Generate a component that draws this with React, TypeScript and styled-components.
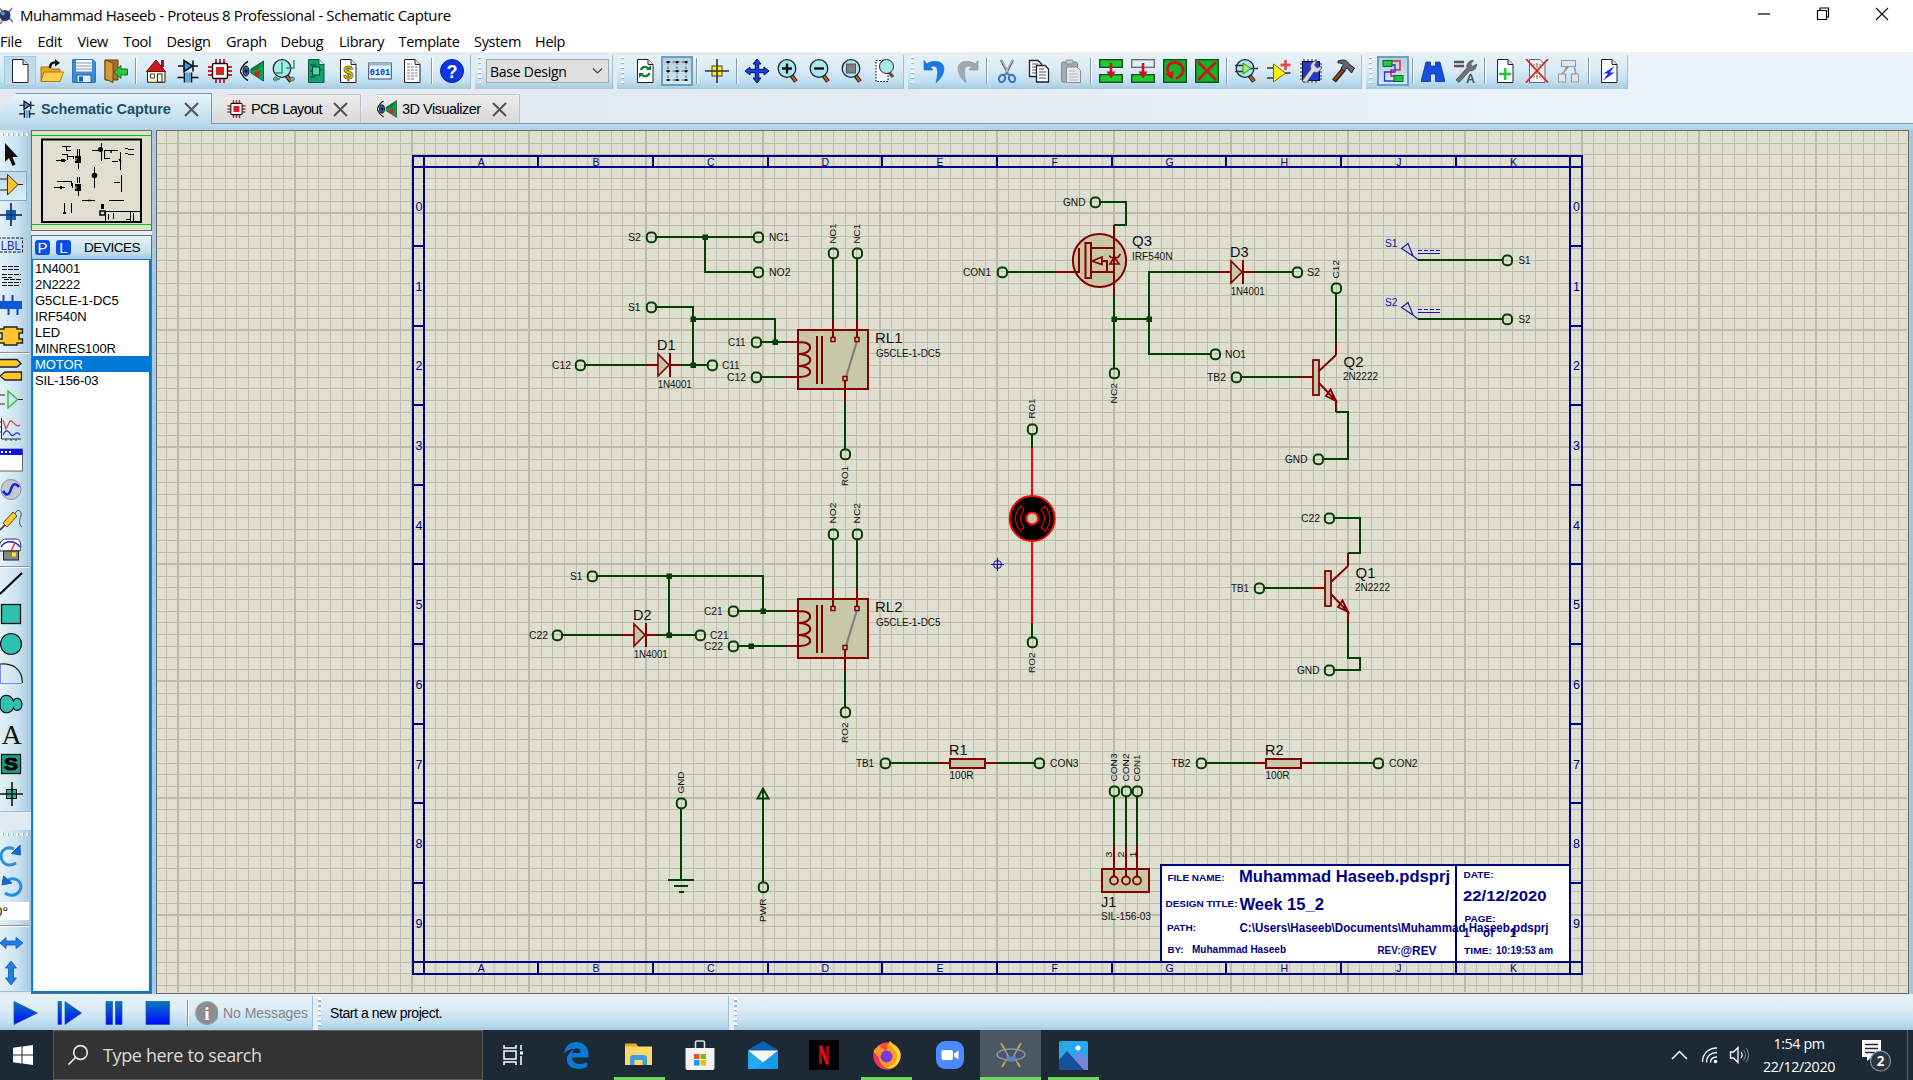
import React from 'react';
import styled, { createGlobalStyle } from 'styled-components';

const GlobalStyle = createGlobalStyle`
  * { box-sizing: border-box; }
  body { margin: 0; overflow: hidden; background: #e3eaf1; }
`;

const uiFont = '"Open Sans", "Noto Sans", sans-serif';
const arial = '"Liberation Sans", Arial, sans-serif';
const barFill = 'linear-gradient(180deg, #e4f2f8 0%, #dcebf5 40%, #bfe0f2 78%, #a9c9dd 100%)';

const Window = styled.div`
  width: 1913px; height: 1080px; display: flex; flex-direction: column;
  overflow: hidden; font-family: ${arial}; color: #000;
  background: linear-gradient(90deg, #e2e9f0, #e4ebf2 50%, #eaf2fa 80%);
`;

/* ---------- title and menu ---------- */
const TitleBar = styled.header`
  height: 30px; background: #fff; display: flex; align-items: center;
  font: 15px/30px ${uiFont}; white-space: nowrap; padding-bottom: 1px;
`;
const TitleText = styled.span`margin-left: 4px; letter-spacing: -0.41px; flex: 1;`;
const WinControls = styled.div`display: flex; width: 179px; padding-bottom: 1px;`;
const WinButton = styled.div`width: 59px; display: flex; justify-content: center;`;
const MenuBar = styled.nav`
  height: 22px; background: #fff; display: flex; font: 14.5px/23px ${uiFont};
  letter-spacing: -0.3px; white-space: nowrap;
`;
const MenuItem = styled.span<{ $w: number }>`width: ${p => p.$w}px; flex: none;`;

/* ---------- toolbars ---------- */
const Toolbars = styled.div`height: 37px; padding-top: 2px; display: flex; border-top: 1px solid #f0f0f0;`;
const Bar = styled.div<{ $w: number; $pad?: number }>`
  width: ${p => p.$w}px; height: 34px; margin-right: 4px; padding-left: ${p => p.$pad ?? 0}px; padding-bottom: 2px;
  display: flex; align-items: center; background: ${barFill}; border-right: 1px solid #9fbfd2; flex: none;
`;
const Grip = styled.i<{ $m: number }>`
  width: 3px; height: 30px; margin-right: ${p => p.$m}px; flex: none;
  background: repeating-linear-gradient(180deg, #fff 0 2px, #9fb4c2 2px 3.5px, transparent 3.5px 5px);
`;
const Cell = styled.span<{ $on?: boolean; $soft?: boolean }>`
  width: 32px; height: 30px; flex: none; display: flex; align-items: center; justify-content: center;
  background: ${p => (p.$on ? 'linear-gradient(180deg,#b4d0e2,#d2e8f4)' : p.$soft ? '#bfdcef' : 'none')};
  border: ${p => (p.$on ? '2px solid #6a9fbe' : p.$soft ? '1px solid #9ccbea' : 'none')};
`;
const Divider = styled.i`
  width: 2px; height: 26px; margin: 0 3px; flex: none; background: linear-gradient(90deg,#8d9aa3 50%,#fff 50%);
`;
const Select = styled.div`
  width: 123px; height: 24px; padding: 0 5px 0 3px; display: flex; align-items: center; justify-content: space-between;
  border: 1px solid #a8a8a8; background: #dfdfdf; font: 14px ${uiFont}; letter-spacing: -0.25px; white-space: nowrap;
`;

/* ---------- tabs ---------- */
const Tabs = styled.div`
  height: 35px; padding-top: 4px; display: flex; align-items: flex-end; border-bottom: 1px solid #6c9fbc;
`;
const TabShape = styled.div<{ $w: number; $active?: boolean; $pad: number }>`
  width: ${p => p.$w}px; height: ${p => (p.$active ? 31 : 29)}px; margin-bottom: ${p => (p.$active ? -1 : 0)}px;
  padding-left: ${p => p.$pad}px; padding-right: 12px; display: flex; align-items: center; flex: none;
  clip-path: polygon(0 60%, 16px 0, 100% 0, 100% 100%, 0 100%);
  background: ${p => (p.$active ? 'linear-gradient(180deg,#e8f4fa,#bcdcef)' : 'linear-gradient(180deg,#ececec,#d9d9d9)')};
  border-top: 1px solid ${p => (p.$active ? '#6c9fbc' : '#c8c8c8')};
  border-right: 1px solid ${p => (p.$active ? '#6c9fbc' : '#c0c0c0')};
  font: ${p => (p.$active ? 'bold 14.5px ' + arial : '14.5px ' + arial)};
  color: ${p => (p.$active ? '#1f4e70' : '#000')}; white-space: nowrap;
`;
const TabLabel = styled.span<{ $ls: number }>`margin-left: 5px; flex: 1; letter-spacing: ${p => p.$ls}px;`;
const Band = styled.div`height: 6px; background: linear-gradient(180deg,#bddcef,#b1d3e8);`;

/* ---------- work area ---------- */
const Main = styled.main`
  height: 864px; display: grid; grid-template-columns: 31px 121px 4px 1753px 4px; background: #a9c6da;
`;
const Rail = styled.div`display: flex; flex-direction: column; overflow: hidden; background: #e2e9f0;`;
const RailGroup = styled.div<{ $h: number; $pt: number }>`
  height: ${p => p.$h}px; padding-top: ${p => p.$pt}px; margin-bottom: 18px; display: flex; flex-direction: column;
  background: linear-gradient(90deg,#e2f0f7,#cbe3f1 55%,#a8c9dd); border-bottom: 1px solid #9fbfd2; flex: none;
`;
const RailGrip = styled.i`
  height: 3px; flex: none; margin: 0 0 5px 1px;
  background: repeating-linear-gradient(90deg, #fff 0 2px, #9fb4c2 2px 3.5px, transparent 3.5px 5px);
`;
const RailCell = styled.span<{ $on?: boolean }>`
  height: 30px; width: ${p => (p.$on ? 27 : 31)}px; flex: none; display: flex; align-items: center; padding-left: 0;
  border: solid #7faac4; border-width: ${p => (p.$on ? '1px 1px 1px 0' : '0')};
  background: ${p => (p.$on ? 'linear-gradient(180deg,#bdd8e8,#dceef7)' : 'none')};
`;
const RailRule = styled.i`height: 2px; width: 29px; margin: 1px 0 1px; flex: none; background: linear-gradient(180deg,#909090 50%,#fff 50%);`;
const Angle = styled.div`height: 18px; width: 29px; margin: 1px 0 4px; background: #fff; font: 13px/18px ${uiFont}; flex: none; text-indent: -5px; overflow: hidden;`;

const Side = styled.aside`display: flex; flex-direction: column;`;
const Overview = styled.div`height: 101px; border: 1px solid #6b6b6b; background: #dfdfd0; display: flex;`;
const Gap = styled.div`height: 4px; background: #e8eef3;`;
const Devices = styled.div`flex: 1; border: 1px solid #6b6b6b; display: flex; flex-direction: column;`;
const DevHead = styled.div`
  height: 23px; padding-left: 3px; display: flex; align-items: center; gap: 6px; font: 13.6px ${arial};
  background: linear-gradient(180deg,#e6f3fa,#c4e0f0 70%,#a9c9dd); white-space: nowrap;
`;
const KeyCap = styled.b`
  width: 15px; height: 15px; border-radius: 3px; background: #0a4fe0; color: #fff; text-align: center; font: 15px/16px ${arial};
`;
const DevTitle = styled.span`margin-left: 7px; letter-spacing: -0.5px;`;
const DevList = styled.div`flex: 1; border: 1px solid #0078d7; border-width: 1px 2px 2px 1px; background: #fff; font: 13px/17px ${arial};`;
const DevRow = styled.div<{ $sel?: boolean }>`
  height: 16px; padding-left: 2px; letter-spacing: -0.08px; white-space: nowrap;
  background: ${p => (p.$sel ? '#0078d7' : 'transparent')}; color: ${p => (p.$sel ? '#fff' : '#000')};
`;
const Canvas = styled.div`height: 864px; border: solid #6b6b6b; border-width: 1px 1px 1px 1px; background: #dfdfd0; display: flex; overflow: hidden;`;

/* ---------- status bar ---------- */
const Status = styled.footer`height: 36px; padding-top: 2px; display: flex; background: #e6eef4;`;
const StatusBar = styled.div<{ $w?: number }>`
  ${p => (p.$w ? `width: ${p.$w}px; flex: none; border-right: 1px solid #9fbfd2; margin-right: 5px;` : 'flex: 1;')}
  display: flex; align-items: center; background: ${barFill}; font: 14px ${arial}; white-space: nowrap;
`;
const Dim = styled.span`margin-left: 5px; color: #858585; letter-spacing: -0.05px;`;
const Msg = styled.span`letter-spacing: -0.42px;`;

/* ---------- taskbar ---------- */
const Taskbar = styled.div`height: 50px; display: flex; background: #1b2a34; color: #fff; font-family: ${uiFont};`;
const Start = styled.div`width: 53px; display: flex; align-items: center; padding-left: 13px;`;
const Search = styled.div`
  width: 430px; border: 1px solid #5d5d5d; background: #333; color: #dcdcdc; display: flex; align-items: center;
  padding-left: 13px; font-size: 18px; letter-spacing: -0.36px; gap: 14px; white-space: nowrap;
`;
const Task = styled.div<{ $w?: number; $run?: number; $active?: boolean }>`
  width: ${p => p.$w ?? 62}px; flex: none; display: flex; align-items: center; justify-content: center;
  background: ${p => (p.$active ? '#4b5861' : 'transparent')};
  border-bottom: 0; background-image: ${p => (p.$run ? 'linear-gradient(#6fd95d,#6fd95d)' : 'none')};
  background-size: ${p => p.$run ?? 0}px 3px; background-position: center bottom; background-repeat: no-repeat;
`;
const Spacer = styled.div`flex: 1;`;
const Tray = styled.div`display: flex; align-items: center; width: 246px;`;
const TrayIcon = styled.span<{ $w: number }>`width: ${p => p.$w}px; display: flex; justify-content: center;`;
const Clock = styled.div`width: 94px; text-align: center; font-size: 14.3px; line-height: 23px; letter-spacing: -0.4px; padding-bottom: 1px;`;
const Notice = styled.div`width: 60px; display: flex; justify-content: center;`;
const DesktopEdge = styled.i`width: 1px; height: 50px; margin-left: auto; margin-right: 5px; background: #56636c;`;

/* ================= icons ================= */
const I: React.FC<{ children: React.ReactNode; w?: number; h?: number; vb?: string }> = ({ children, w = 24, h = 24, vb }) => (
  <svg width={w} height={h} viewBox={vb ?? `0 0 ${w} ${h}`} fill="none">{children}</svg>
);
const sheet = <path d="M4.500 .5H15L20 5.500V23.500H4.500Z" fill="#fff" stroke="#222" />;
const fold = <path d="M15 .5V5.500H20" fill="#ddd" stroke="#222" />;
const lens = (
  <>
    <path d="M14.500 16.500L19 22.500" stroke="#3a1c08" strokeWidth="4.500" />
    <path d="M14.800 16.800L18.800 22" stroke="#b06a28" strokeWidth="2.200" />
    <circle cx="10" cy="9.500" r="8.800" fill="#a8eaea" stroke="#224" strokeWidth="1.300" />
  </>
);
const schem = (
  <g stroke="#111" strokeWidth="1.600">
    <path d="M2 7H22M17 1.500V12.500" /><path d="M8 1.500V12.500L16.500 7Z" fill="#28a0f0" />
    <path d="M1.500 18.500H8M16 18.500H22.500M8.500 13.500V23.500M15.500 13.500V23.500" />
    <path d="M11 13.500V23.500M13.200 13.500V23.500" stroke="#28a0f0" />
  </g>
);
const pcb = (
  <>
    <path d="M8 0V24M12 0V24M16 0V24M0 8H24M0 12H24M0 16H24" stroke="#d3202a" strokeWidth="1.900" />
    <rect x="4.500" y="4.500" width="15" height="15" rx="1.500" fill="#fff" stroke="#111" strokeWidth="1.400" />
    <rect x="8" y="8" width="8" height="8" fill="#d3202a" />
  </>
);
const viz = (
  <>
    <path d="M0 12C3 6 5 4 8 2.500M0 12C3 18 5 20 8 21.500" stroke="#111" strokeWidth="1.400" />
    <ellipse cx="6" cy="12" rx="3" ry="5" fill="#2a63a8" stroke="#111" /><circle cx="6" cy="12" r="1.600" fill="#111" />
    <path d="M23.500 2V22L11 14V10Z" fill="#11a04a" stroke="#0a6030" /><path d="M23 2.500L11.500 10V12L18 10Z" fill="#0c7c38" />
    <path d="M20 11L19.500 19L13 14.500Z" fill="#d22" />
  </>
);
const green = (k: 'copy' | 'move' | 'rot' | 'del') => (
  <>
    {k === 'copy' || k === 'move' ? (
      <>
        <rect x=".7" y=".7" width="22.600" height="7.600" fill={k === 'copy' ? '#1fcc33' : '#dff0f4'} stroke={k === 'copy' ? '#0a4a10' : '#667'} strokeWidth="1.300" />
        <rect x=".7" y="15.700" width="22.600" height="7.600" fill="#1fcc33" stroke="#0a4a10" strokeWidth="1.300" />
        <path d="M12 4V17" stroke="#cc1420" strokeWidth="2.600" /><path d="M7.500 12.500H16.500L12 19.500Z" fill="#cc1420" />
      </>
    ) : (
      <>
        <rect x=".7" y=".7" width="22.600" height="22.600" fill="#12b526" stroke="#0a4a10" strokeWidth="1.300" />
        {k === 'del' ? <path d="M3 3L21 21M21 3L3 21" stroke="#cc1420" strokeWidth="2.800" />
          : <><path d="M7 16C1.500 9 6 3.500 12 3.500C19 3.500 22.500 11 18 16C16.500 18 15 19 13 19.500" stroke="#cc1420" strokeWidth="2.800" /><path d="M2 15L10.500 12L9.500 20.500Z" fill="#cc1420" /></>}
      </>
    )}
  </>
);

const icons: Record<string, React.ReactNode> = {
  new: <>{sheet}{fold}</>,
  open: <><path d="M1 22V8H9L11 10H20V22Z" fill="#e9a818" stroke="#a87408" /><path d="M4 13H23.500L20 22.500H1Z" fill="#ffd04a" stroke="#b07c10" /><path d="M10 9C10 4 13 3 17 3.500" stroke="#111" strokeWidth="2.400" /><path d="M15 0L20 4L15 7.500Z" fill="#111" /></>,
  save: <><path d="M.7 .7H21L23.300 3V23.300H.7Z" fill="#3a8edc" stroke="#1d62a8" /><rect x="4" y="1" width="16" height="11.500" fill="#f6f9fc" /><path d="M4 4H20M4 7H20M4 10H20" stroke="#7ea0bc" /><rect x="5" y="16" width="14" height="7.500" fill="#e8eef4" stroke="#1d62a8" /><rect x="7" y="17.500" width="4" height="5" fill="#1d62a8" /></>,
  exit: <><path d="M1 1H14V21H1Z" fill="#a87424" stroke="#5c3c0c" /><path d="M1 1L9 4V23.500L1 20Z" fill="#d59a3c" stroke="#6c480f" /><path d="M10 13L17 6.500V10H23.500V16H17V19.500Z" fill="#2fc444" stroke="#0b7a1c" /></>,
  home: <><path d="M17 1H20V8H17Z" fill="#a01515" /><path d="M3.500 12V23.300H21V12Z" fill="#fdf6c0" stroke="#222" /><path d="M2.500 12.500L12 1L21.500 12.500Z" fill="#c71a1a" stroke="#6c0c0c" /><rect x="13.500" y="15" width="4.500" height="8" fill="#fff" stroke="#222" /><path d="M6.500 15H10.500V19H6.500Z" fill="#fff" stroke="#446" /></>,
  schem, pcb, viz,
  gerber: <>{lens}<path d="M3 14H10V3M14 9H22V1M1 20H8" stroke="#1a9a6a" strokeWidth="1.400" /><circle cx="3.500" cy="20" r="2" stroke="#1a9a6a" /><circle cx="20.500" cy="20" r="2" fill="#b8e" stroke="#1a9a6a" /></>,
  design: <><path d="M4.500 .5H15L20 5.500V23.500H4.500Z" fill="#12a070" stroke="#0a5a3c" /><path d="M15 .5V5.500H20" fill="#cfe" stroke="#0a5a3c" /><rect x="8.500" y="8" width="7" height="8" fill="#55d8a8" stroke="#04402a" /><path d="M6 6H11V8M18 11H15.500M6 18H11V16M6 12H8.500" stroke="#04402a" /></>,
  bom: <>{sheet}{fold}<text x="12.200" y="19.500" fontSize="18" fontWeight="bold" textAnchor="middle" fill="#d8c400" stroke="#5a4e00" strokeWidth=".6" fontFamily="Liberation Sans">$</text></>,
  hex: <><rect x=".7" y="4" width="22.600" height="16" fill="#dff8fc" stroke="#446" /><rect x=".7" y="3.500" width="22.600" height="3" fill="#99b8d0" /><text x="12" y="16.300" fontSize="8.500" fontWeight="bold" textAnchor="middle" fill="#1030d8" fontFamily="Liberation Mono">0101</text></>,
  report: <>{sheet}{fold}<path d="M7 5H12M7 8H17.500M7 11H17.500M7 14H17.500M7 17H17.500M7 20H15" stroke="#777" strokeDasharray="3 1" /></>,
  help: <><circle cx="12" cy="12" r="11.500" fill="#0a35e8" stroke="#0420a0" /><text x="12" y="18.500" fontSize="18" fontWeight="bold" textAnchor="middle" fill="#fff" fontFamily="Liberation Sans">?</text></>,
  refresh: <>{sheet}{fold}<path d="M8 11C9 7 14 7 15.500 10M16.500 14C15 18 10 18 8.500 15" stroke="#147a38" strokeWidth="2.200" /><path d="M13 11H18V6Z" fill="#147a38" /><path d="M6 19V14H11Z" fill="#147a38" /></>,
  grid: <><path d="M3 3H22M3 12H22M3 21H22M3 3V22M12 3V22M21 3V22" stroke="#555" strokeDasharray="2.500 2" /><path d="M1.500 3H4.500M10.500 3H13.500M19.500 3H22.500M1.500 12H4.500M10.500 12H13.500M19.500 12H22.500M1.500 21H4.500M10.500 21H13.500M19.500 21H22.500" stroke="#111" strokeWidth="2.200" /></>,
  origin: <><rect x="7" y="7" width="10" height="10" fill="#ffee00" stroke="#443" /><path d="M12 0V24M0 12H24" stroke="#333" strokeWidth="1.600" /></>,
  pan: <path d="M12 0L16 5H13.700V10.300H19V8L24 12L19 16V13.700H13.700V19H16L12 24L8 19H10.300V13.700H5V16L0 12L5 8V10.300H10.300V5H8Z" fill="#1240e8" stroke="#03104a" />,
  zin: <>{lens}<path d="M10 4.500V14.500M5 9.500H15" stroke="#111" strokeWidth="2.400" /></>,
  zout: <>{lens}<path d="M5 9.500H15" stroke="#111" strokeWidth="2.400" /></>,
  zall: <>{lens}<rect x="5.500" y="5" width="9" height="9" fill="#808080" stroke="#555" /></>,
  zarea: <><rect x="3" y="1.500" width="12" height="21" fill="#fff" stroke="#000" strokeDasharray="1.500 1.500" /><path d="M16 13L20 18" stroke="#7a4518" strokeWidth="3" /><circle cx="13.500" cy="7.500" r="7" fill="#a8eaea" stroke="#224" /></>,
  undo: <path d="M1 1.500V11H10L7.500 8C13 5 17 9 13 23.500C22 17 26 1 10 2.500C7 3 5 4 4 5Z" fill="#1a78e0" stroke="#1060c0" strokeWidth=".6" />,
  redo: <path d="M23 1.500V11H14L16.500 8C11 5 7 9 11 23.500C2 17 -2 1 14 2.500C17 3 19 4 20 5Z" fill="#a3a8ab" stroke="#8a8f92" strokeWidth=".6" />,
  cut: <><path d="M6 1L14 16M18 1L10 16" stroke="#667" strokeWidth="2.400" /><path d="M6.500 1L14 15M17.500 1L10 15" stroke="#dde" strokeWidth=".8" /><ellipse cx="7" cy="19.500" rx="3" ry="3.800" stroke="#2f74c8" strokeWidth="2" transform="rotate(25 7 19.500)" /><ellipse cx="17" cy="19.500" rx="3" ry="3.800" stroke="#2f74c8" strokeWidth="2" transform="rotate(-25 17 19.500)" /></>,
  copy: <><path d="M2.500 1.500H11L14.500 5V17.500H2.500Z" fill="#fff" stroke="#222" strokeWidth="1.300" /><path d="M5 5H11M5 8H11M5 11H11M5 14H11" stroke="#555" /><path d="M9.500 6.500H18L21.500 10V23H9.500Z" fill="#fff" stroke="#222" strokeWidth="1.300" /><path d="M12 10H17M12 13H19M12 16H19M12 19H19" stroke="#555" /></>,
  paste: <><rect x="2.500" y="3" width="16" height="20" rx="1.500" fill="#a7abad" stroke="#84888b" /><rect x="7" y="1" width="7" height="4" rx="1" fill="#c9cccd" stroke="#84888b" /><path d="M7.500 8H18L21.500 11.500V23.500H7.500Z" fill="#e7e9ea" stroke="#8a8e90" /><path d="M10 12H16M10 15H19M10 18H19M10 21H19" stroke="#b5b8ba" /></>,
  bcopy: green('copy'), bmove: green('move'), brot: green('rot'), bdel: green('del'),
  pick: <>{lens}<path d="M0 6.500H8M0 12.500H8M15 9.500H23" stroke="#333" strokeWidth="1.300" /><path d="M8 4V15L16 9.500Z" fill="#a6f060" stroke="#2a8a2a" /></>,
  make: <><path d="M0 9H7M0 19H7M18 14H23.500" stroke="#333" strokeWidth="1.400" /><path d="M6.500 5V23L18.500 14Z" fill="#ffee18" stroke="#776a00" /><path d="M18.500 1V11M13.500 6H23.500" stroke="#fff" strokeWidth="4.500" /><path d="M18.500 1V11M13.500 6H23.500" stroke="#e05050" strokeWidth="2.800" /></>,
  pack: <><path d="M5 0V24M9 0V24M13 0V24M17 0V24M1 5H23M1 9H23M1 13H23M1 17H23M1 20H23" stroke="#333" /><rect x="3.500" y="2.500" width="17" height="19" fill="#2338c8" stroke="#111" /><path d="M3 22L12 10C10.500 5 14 1.500 18 2L15.500 6L18 9L22.500 7C22.500 12 18 14.500 15 13L7.500 23.500Z" fill="#d6dade" stroke="#555" strokeWidth=".8" /></>,
  hammer: <><path d="M3 22L13 10" stroke="#3a1c0c" strokeWidth="5" /><path d="M3.500 21L13 10" stroke="#8a4c24" strokeWidth="2.500" /><path d="M7 2C12 0 16 1 18 5L23.500 9L20.500 14L16 9L12.500 12L10 9L12.500 6C11 4 9 4 7 4Z" fill="#606468" stroke="#222" /></>,
  wire: <><path d="M10 2H19V11H10V17H15" stroke="#e02828" strokeWidth="1.500" /><path d="M10 6H14V13H3.500V22H14" stroke="#2030e8" strokeWidth="1.300" /><rect x="2" y="1.500" width="9" height="6" fill="#22c83a" stroke="#063" /><rect x="13" y="16.500" width="9" height="6" fill="#22c83a" stroke="#063" /></>,
  bino: <path d="M5 3H9.500V7H14.500V3H19L20.500 9L24 22.500H14.500V15H9.500V22.500H0L3.500 9Z" fill="#1450e0" stroke="#06209a" strokeWidth=".7" />,
  prop: <><path d="M1 3H11M1 7H11" stroke="#555" strokeWidth="2.400" /><path d="M3 21L14 9C13 4 17 1 20.500 1.500L17.500 5L20 7.500L23.500 5C23.500 10 20 12.500 17 11.500L6 23.500Z" fill="#707478" stroke="#44484c" strokeWidth=".8" /><text x="17.500" y="23.500" fontSize="12.500" fontWeight="bold" textAnchor="middle" fill="#4c5054" fontFamily="Liberation Sans">A</text></>,
  nsheet: <>{sheet}{fold}<path d="M12.200 9V21M6.200 15H18.200" stroke="#22c83a" strokeWidth="2.600" /></>,
  dsheet: <><path d="M4.500 .5H15L20 5.500V23.500H4.500Z" fill="#eef0ee" stroke="#667" /><path d="M8 6H16M8 18H16M12 4V20" stroke="#686" strokeDasharray="2 1" /><path d="M1 0L23 23.500M23 0L1 23.500" stroke="#e02020" strokeWidth="1.800" /></>,
  tree: <g stroke="#999" fill="#e2e6e8"><path d="M12 7L5 15M17 7L19 15M10 7L6 15" strokeWidth="1.500" /><rect x="4.500" y="1.500" width="14" height="6" /><rect x="1.500" y="15" width="7" height="8" /><rect x="14.500" y="15" width="7" height="8" /></g>,
  erc: <>{sheet}{fold}<path d="M17.500 7L6.500 14.500H11L6 21.500L17.500 13.500H13Z" fill="#1a30e8" /></>,
};

const rails: Record<string, React.ReactNode> = {
  arrow: <path d="M5 2L5 21L9 17L12.500 25L15.500 23.500L12.500 16H18Z" fill="#111" />,
  comp: <><path d="M0 8H7M0 19H7M18 13.500H23" stroke="#222" /><path d="M7.500 3.500V24L18 13.500Z" fill="#ffc52c" stroke="#332" /></>,
  junc: <><path d="M11 2V25M0 14H22" stroke="#123" strokeWidth="1.600" /><rect x="6" y="9" width="10" height="10" fill="#0a62c8" /><path d="M11 9V19M6 14H16" stroke="#123" /></>,
  lbl: <><rect x="-2" y="7" width="24.500" height="14" stroke="#111" strokeDasharray="3 1.500" /><text x="0.800" y="18.700" fontSize="13" textLength="20" lengthAdjust="spacingAndGlyphs" fill="#1525d8" fontFamily="Liberation Sans">LBL</text></>,
  script: <path d="M2 5.500H20M2 8.500H20M2 13.500H21M2 16.500H12M4 18.500H21M2 21.500H21M2 24.500H20" stroke="#111" strokeDasharray="5 1" strokeWidth="1.200" />,
  bus: <><path d="M3.500 4V14M12.500 4V14M8.500 14V24M17.500 14V24" stroke="#1040d8" strokeWidth="2" /><rect x="0" y="10" width="22" height="8" fill="#0b58d8" /></>,
  chip: <path d="M-1 8H4V6H17V8H22.500V12H19V18H22.500V22H17V24H4V22H-1V18H2V12H-1Z" fill="#ffc52c" stroke="#222" strokeWidth="1.400" />,
  ports: <><path d="M-1 4.500H17L21 8.500L17 12H-1Z" fill="#ffc52c" stroke="#222" strokeWidth="1.300" /><path d="M21.500 17H5L0 21L5 25H21.500Z" fill="#ffc52c" stroke="#222" strokeWidth="1.300" /></>,
  pin: <><path d="M0 10H5M0 19H5M18 14.500H23" stroke="#222" strokeWidth="1.200" /><path d="M8 6V23L17.500 14.500Z" stroke="#28c832" strokeWidth="1.400" /></>,
  graph: <><path d="M1.500 3V24H21M1.500 7H-1M1.500 12H-1M1.500 17H-1M6 24V26M11 24V26M16 24V26" stroke="#333" /><path d="M3 5L6 14L10 6C13 4 15 14 20 10" stroke="#e04040" strokeWidth="1.200" /><path d="M3 20C6 13 9 16 11 20C14 23 16 14 20 20" stroke="#2030e0" strokeWidth="1.200" /></>,
  tape: <><rect x="-1" y="4" width="23.500" height="22" fill="#fff" stroke="#666" /><rect x="-1" y="4" width="23.500" height="6" fill="#0a14e8" /><path d="M1 7H3M5 7H7M9 7H11" stroke="#fff" strokeWidth="2" /></>,
  gen: <><circle cx="11" cy="14.500" r="10" fill="#c4c8d2" stroke="#8a90a0" /><path d="M3 16C6 21 9 21 11 14C13 8 16 8 19 12" stroke="#1424e0" strokeWidth="2.500" /></>,
  probe: <><path d="M0 25L5 20" stroke="#333" strokeWidth="1.600" /><path d="M3 18L13 7L17 11L7 22Z" fill="#ffc52c" stroke="#553" /><path d="M15 9C17 3 22 5 21 11C19 16 19 20 22 22" stroke="#555" /></>,
  meter: <><path d="M0 16C-2 8 2 4 6 4H16C20 4 22 9 20 16Z" fill="#fff" stroke="#333" /><path d="M1 12C5 5 15 5 20 12" stroke="#1424e0" strokeWidth="1.500" /><path d="M11 16L15 8" stroke="#d22" strokeWidth="1.400" /><rect x="3.500" y="16" width="15" height="9" fill="#888" stroke="#222" /><rect x="12" y="17.500" width="4" height="4" fill="#ffe818" /></>,
  line: <path d="M0 25L22 4" stroke="#000" strokeWidth="2" />,
  box: <rect x="1.500" y="5.500" width="19" height="19" fill="#2fc0ae" stroke="#111" strokeWidth="1.300" />,
  circ: <circle cx="11" cy="15" r="10.500" fill="#2fc0ae" stroke="#111" strokeWidth="1.200" />,
  arc: <><path d="M.5 5.500V24.500H22" stroke="#1424e0" strokeDasharray="1 1" /><path d="M0 5C12 4 22 9 22.500 24" stroke="#222" strokeWidth="1.200" /></>,
  path: <path d="M13.500 12C15 8 21 8 22 15C22 22 15 23 13.500 19C11 25 2 26 0 18V12C2 4 11 5 13.500 12Z" fill="#2fc0ae" stroke="#111" strokeWidth="1.200" />,
  text: <text x="11.500" y="24.500" fontSize="28" textAnchor="middle" fill="#111" fontFamily="Liberation Serif">A</text>,
  sym: <><rect x="1.500" y="5.500" width="19" height="19" fill="#16a68c" stroke="#111" strokeWidth="1.300" /><text x="11" y="20.500" fontSize="16" fontWeight="bold" textAnchor="middle" textLength="14" lengthAdjust="spacingAndGlyphs" stroke="#000" fill="#000" fontFamily="Liberation Sans">S</text></>,
  mark: <><rect x="6.500" y="10.500" width="10" height="9" fill="#1fb89c" stroke="#111" /><path d="M12 3V27M0 15H23" stroke="#111" strokeWidth="1.600" /></>,
  rcw: <><path d="M16 22C8 27 1 22 1 14.500C2 8 8 5 14 8" stroke="#2a8ede" strokeWidth="3" /><path d="M20 4L20.500 14L11.500 12.500Z" fill="#1766c8" stroke="#1766c8" /></>,
  rccw: <><path d="M5 22C12 27 20 23 21 16C21 9 14 6 8 9" stroke="#2a8ede" strokeWidth="3" /><path d="M3.500 5L2 14L12 12Z" fill="#1766c8" stroke="#1766c8" /></>,
  fh: <path d="M0 15L6 9.500V13H16V9.500L23 15L16 20.500V17H6V20.500Z" fill="#1f7ee0" stroke="#0c58b4" strokeWidth=".8" />,
  fv: <path d="M11 3L16.500 10H13.500V20H16.500L11 27L5.500 20H8.500V10H5.500Z" fill="#1f7ee0" stroke="#0c58b4" strokeWidth=".8" />,
};

const Tool: React.FC<{ n: string; on?: boolean; soft?: boolean }> = ({ n, on, soft }) => (
  <Cell $on={on} $soft={soft}><I>{icons[n]}</I></Cell>
);
const tools = (s: string) => s.split(' ').map((n, i) => (n === '|' ? <Divider key={i} /> : <Tool key={i} n={n} />));
const railTools = (s: string) =>
  s.split(' ').map((n, i) => (n === '|' ? <RailRule key={i} /> : (
    <RailCell key={i} $on={n === 'comp'}><I w={24} h={30}>{rails[n]}</I></RailCell>
  )));
const Close = () => <I w={15} h={15}><path d="M1 1L14 14M14 1L1 14" stroke="#555" strokeWidth="2" /></I>;

/* ================= schematic ================= */
const GREEN = '#004000';
const RED = '#840000';
const NAVY = '#000084';
const BODY = '#c8c8a8';

const W: React.FC<{ d: string; c?: string; w?: number }> = ({ d, c = GREEN, w = 2 }) => (
  <path d={d} stroke={c} strokeWidth={w} fill="none" shapeRendering="crispEdges" />
);
const Term: React.FC<{ x: number; y: number }> = ({ x, y }) => (
  <rect x={x - 4.200} y={y - 4.500} width="9.200" height="9.700" rx="3.700" stroke={GREEN} strokeWidth="2" fill="none" />
);
const Dot: React.FC<{ x: number; y: number }> = ({ x, y }) => <rect x={x - 2.500} y={y - 2.500} width="5.500" height="5.500" fill={GREEN} />;
const T: React.FC<{ x: number; y: number; w: number; s?: number; c?: string; b?: boolean; children: string }> = ({ x, y, w, s = 10, c = '#111', b, children }) => (
  <text x={x} y={y} fontSize={s} textLength={w} lengthAdjust="spacingAndGlyphs" fill={c} fontWeight={b ? 'bold' : 'normal'}>{children}</text>
);
const V: React.FC<{ x: number; y: number; w: number; children: string }> = ({ x, y, w, children }) => (
  <text transform={`translate(${x + 3.300} ${y}) rotate(-90)`} fontSize="9.600" textLength={w} lengthAdjust="spacingAndGlyphs" fill="#111">{children}</text>
);
const Diode: React.FC<{ x: number; y: number; n: string; pre: number }> = ({ x, y, n, pre }) => (
  <g>
    <W c={RED} d={`M${x - pre} ${y}H${x}M${x + 11} ${y}H${x + 24}M${x + 12} ${y - 12}V${y + 12}`} />
    <path d={`M${x} ${y - 11}V${y + 11}L${x + 11} ${y}Z`} fill={BODY} stroke={RED} strokeWidth="1.600" />
    <T x={x - 1} y={y - 15.500} w={18.500} s={15.500}>{n}</T>
    <T x={x - .3} y={y + 22.500} w={34}>1N4001</T>
  </g>
);
const Relay: React.FC<{ dy: number; n: string }> = ({ dy, n }) => (
  <g transform={`translate(0 ${dy})`}>
    <rect x="798" y="330" width="70" height="59" fill={BODY} stroke={RED} strokeWidth="2" />
    <W c={RED} d="M785 342H798M785 377H798M816.500 336V384M822 336V384M833 319V338M857 319V338M845 380V402" />
    <path d="M798 342.500C814 340 814 354 799 354C814 354 814 366 799 366C814 366 814 378 798 377" stroke={RED} strokeWidth="2" fill="none" />
    <path d="M857 341L846 377" stroke="#808080" strokeWidth="2.200" />
    {[[833, 339], [857, 339], [845, 378]].map(([a, b]) => <rect key={a} x={a - 2} y={b - 1.500} width="4" height="4" fill={BODY} stroke={RED} strokeWidth="1.500" />)}
    <T x={875} y={343} w={27.500} s={15.500}>{n}</T>
    <T x={876} y={357} w={64.500}>G5CLE-1-DC5</T>
  </g>
);
const Bjt: React.FC<{ dx: number; dy: number; n: string }> = ({ dx, dy, n }) => (
  <g transform={`translate(${dx} ${dy})`}>
    <W c={RED} d="M1299 377H1313M1336 342V355M1336 400V412" />
    <rect x="1313" y="360" width="6" height="35" fill={BODY} stroke={RED} strokeWidth="1.800" />
    <path d="M1336 355L1319 371M1319 383L1336 401M1330.500 389.500L1326 396L1336 401Z" stroke={RED} strokeWidth="1.900" fill="none" />
    <T x={1343.500} y={366.500} w={20} s={15.500}>{n}</T>
    <T x={1343} y={379.500} w={35}>2N2222</T>
  </g>
);
const Resistor: React.FC<{ x: number; w: number; n: string }> = ({ x, w, n }) => (
  <g>
    <W c={RED} d={`M${x - 12} 763H${x}M${x + w} 763H${x + w + 12}`} />
    <rect x={x} y="759" width={w} height="9" fill={BODY} stroke={RED} strokeWidth="2" />
    <T x={x - 1} y={755} w={18.500} s={15.500}>{n}</T>
    <T x={x - .5} y={778.500} w={24}>100R</T>
  </g>
);
const Logic: React.FC<{ dy: number; n: string }> = ({ dy, n }) => (
  <g transform={`translate(0 ${dy})`}>
    <T x={1385} y={246.500} w={12.500} c="#1010b8">{n}</T>
    <path d="M1408 243.500L1401.500 248.500L1413 256ZL1413 256L1418 260" stroke="#1010b8" fill="none" strokeWidth="1.100" />
    <W c="#1010b8" w={1} d="M1418 253.500H1440" />
    <path d="M1418 250.500H1440" stroke="#1010b8" strokeDasharray="4 2" shapeRendering="crispEdges" />
    <W d="M1418 260H1502" /><Term x={1507} y={260} /><T x={1518.500} y={264} w={12}>{n}</T>
  </g>
);

const range = (n: number) => Array.from({ length: n }, (_, i) => i);
const Grid = () => (
  <g fill="#bcbcac">
    {range(151).map(i => { const k = i - 1; const major = k % 10 === 0; const x = 178 + k * 11.700;
      return <rect key={i} x={major ? Math.round(x) - 1 : Math.floor(x + .3)} y="131" width={major ? 2 : 1} height="861" />; })}
    {range(74).map(i => { const k = i - 6; const major = k % 10 === 0; const y = 213 + k * 11.700;
      return <rect key={i} x="157" y={major ? Math.round(y) - 1 : Math.floor(y + .3)} width="1750" height={major ? 2 : 1} />; })}
  </g>
);
const colTicks = [538, 653, 768, 882, 997, 1112, 1226, 1341, 1456];
const rowTicks = [246, 326, 405, 485, 564, 644, 724, 803, 883];
const Frame = () => (
  <g>
    <W c={NAVY} d="M413 156H1582V973.500H413ZM424 156V973M1570 156V973M413 167H1582M413 962H1582" />
    <W c={NAVY} d={colTicks.map(x => `M${x} 156V167M${x} 962V973`).join('') + rowTicks.map(y => `M413 ${y}H424M1570 ${y}H1582`).join('')} />
    {'ABCDEFGHJK'.split('').map((l, i) => (
      <g key={l} fill={NAVY} fontSize="10.500" textAnchor="middle">
        <text x={481.300 + i * 114.700} y="166">{l}</text><text x={481.300 + i * 114.700} y="972">{l}</text>
      </g>
    ))}
    {range(10).map(i => (
      <g key={i} fill={NAVY} fontSize="12.500" textAnchor="middle">
        <text x="419" y={211 + i * 79.650}>{i}</text><text x="1576.500" y={211 + i * 79.650}>{i}</text>
      </g>
    ))}
  </g>
);
const TitleBlock = () => (
  <g>
    <rect x="1161" y="865" width="409" height="97" fill="#fff" stroke={NAVY} strokeWidth="2" shapeRendering="crispEdges" />
    <W c={NAVY} d="M1456 865V962" />
    <T b c={NAVY} s={9.800} x={1167.500} y={881} w={57}>FILE NAME:</T>
    <T b c={NAVY} s={15.800} x={1239} y={882} w={211}>Muhammad Haseeb.pdsprj</T>
    <T b c={NAVY} s={9.800} x={1165.500} y={907} w={72}>DESIGN TITLE:</T>
    <T b c={NAVY} s={15.800} x={1239.500} y={910} w={84.500}>Week 15_2</T>
    <T b c={NAVY} s={9.800} x={1167} y={931} w={29}>PATH:</T>
    <T b c={NAVY} s={12.400} x={1239.500} y={932} w={309}>C:\Users\Haseeb\Documents\Muhammad Haseeb.pdsprj</T>
    <T b c={NAVY} s={9.800} x={1167.500} y={953} w={16}>BY:</T>
    <T b c={NAVY} s={10} x={1192} y={953} w={94}>Muhammad Haseeb</T>
    <T b c={NAVY} s={10} x={1377.500} y={954} w={23}>REV:</T>
    <T b c={NAVY} s={12.400} x={1400.500} y={955} w={36}>@REV</T>
    <T b c={NAVY} s={9.800} x={1463.500} y={878} w={30}>DATE:</T>
    <T b c={NAVY} s={15.400} x={1463} y={900.500} w={83.500}>22/12/2020</T>
    <T b c={NAVY} s={9.800} x={1464.500} y={922} w={31}>PAGE:</T>
    <T b c={NAVY} s={12.400} x={1463.500} y={937} w={6}>1</T>
    <T b c={NAVY} s={12.400} x={1483} y={937} w={11}>of</T>
    <T b c={NAVY} s={12.400} x={1510} y={937} w={6}>1</T>
    <T b c={NAVY} s={9.800} x={1464} y={954} w={28}>TIME:</T>
    <T b c={NAVY} s={10} x={1496} y={954} w={57}>10:19:53 am</T>
  </g>
);

const terms: [number, number][] = [
  [651, 237], [758, 237], [758, 272], [833, 253], [857, 253], [651, 307], [756, 342], [756, 377], [580, 365], [712, 365], [845, 454],
  [833, 534], [857, 534], [592, 576], [733, 611], [733, 646], [557, 635], [700, 635], [845, 712], [681, 803], [763, 887], [885, 763],
  [1039, 763], [1032, 429], [1032, 642], [1095, 202], [1002, 272], [1114, 373], [1297, 272], [1215, 354], [1336, 288], [1236, 377],
  [1318, 459], [1329, 518], [1259, 588], [1329, 670], [1201, 763], [1378, 763], [1114, 791], [1126, 791], [1137, 791],
];
const dots: [number, number][] = [[705, 237], [693, 319], [693, 365], [775, 342], [669, 576], [669, 635], [763, 611], [751, 646], [1114, 319], [1149, 319]];
const labels: [string, number, number, number][] = [
  ['S2', 628, 241, 13], ['NC1', 769, 241, 20], ['NO2', 769, 276, 21.500], ['S1', 628, 311, 12.500], ['C11', 728, 346, 17.500], ['C12', 727, 381, 19],
  ['C12', 552, 369, 19], ['C11', 722, 369, 17.500], ['S1', 570, 580, 12.500], ['C21', 704, 615, 18.500], ['C22', 704, 650, 19],
  ['C22', 529, 639, 19], ['C21', 710, 639, 18.500], ['TB1', 856, 767, 18], ['CON3', 1050, 767, 28.500], ['GND', 1063, 206, 22.500], ['CON1', 963, 276, 28],
  ['S2', 1307, 276, 13], ['NO1', 1225, 358, 21], ['TB2', 1207, 381, 19], ['GND', 1285, 463, 22.500], ['C22', 1301, 522, 19], ['TB1', 1231, 592, 18],
  ['GND', 1297, 674, 22.500], ['TB2', 1171.500, 767, 19], ['CON2', 1389, 767, 28.500], ['IRF540N', 1132, 260, 40.500], ['SIL-156-03', 1101, 920, 50],
];
const vlabels: [string, number, number, number][] = [
  ['NO1', 833, 243.500, 20], ['NC1', 857, 243.500, 19.500], ['RO1', 845, 486, 20], ['NO2', 833, 523.500, 21], ['NC2', 857, 523.500, 20.500],
  ['RO2', 845, 743, 20.500], ['GND', 681, 793.500, 22], ['PWR', 763, 922, 23.500], ['RO1', 1032, 418.500, 20], ['RO2', 1032, 673, 20.500],
  ['NC2', 1114, 403.500, 20.500], ['C12', 1336, 278.500, 18.500], ['CON3', 1114, 781.500, 28], ['CON2', 1126, 781.500, 28], ['CON1', 1137, 781.500, 27],
  ['3', 1109, 857.500, 6], ['2', 1121, 857.500, 6], ['1', 1132.500, 857.500, 6],
];

const Schematic = () => (
  <svg width="1751" height="862" viewBox="157 131 1751 862" fontFamily='"Liberation Sans", Arial, sans-serif' fill="none">
    <Grid /><Frame /><TitleBlock />
    <W d="M656 237H754M705 237V272H754M833 258V320M857 258V320M656 307H693V365M693 319H775V342M761 342H785M761 377H785M585 365H645M681 365H708M845 402V450" />
    <W d="M833 539V588M857 539V588M597 576H763V611M669 576V635M738 611H785M738 646H785M562 635H623M658 635H696M845 671V708" />
    <W d="M681 808V880M668 880H694M674 886H688M679 892H684M763 798V883M890 763H939M997 763H1035M1032 434V448M1032 623V638" />
    <path d="M763 788.500L757.500 798.500H768.500ZV798" stroke={GREEN} strokeWidth="1.900" />
    <W d="M1100 202H1126V225H1114M1007 272H1056M1114 296V369M1114 319H1149M1218 272H1149V354H1211M1254 272H1293M1336 293V342M1241 377H1300M1336 412H1348V459H1323" />
    <W d="M1334 518H1360V553H1348M1264 588H1312M1348 622V658H1360V670H1334M1206 763H1254M1313 763H1374M1114 796V846M1126 796V846M1137 796V846" />
    <Relay dy={0} n="RL1" /><Relay dy={269} n="RL2" />
    <Diode x={658} y={365} n="D1" pre={13} /><Diode x={634} y={635} n="D2" pre={12} /><Diode x={1231} y={272} n="D3" pre={13} />
    <Resistor x={950} w={35} n="R1" /><Resistor x={1266} w={35} n="R2" />
    <Bjt dx={0} dy={0} n="Q2" /><Bjt dx={12} dy={211} n="Q1" />
    <Logic dy={0} n="S1" /><Logic dy={59} n="S2" />

    <circle cx="1099.500" cy="260.500" r="26.600" fill={BODY} stroke={RED} strokeWidth="2" />
    <W c={RED} d="M1056 272H1079V248M1114 225V296M1091 248H1114M1091 272H1114M1102 261H1107V272" />
    <rect x="1085.500" y="243" width="5.500" height="35" stroke={RED} strokeWidth="2" />
    <path d="M1092 261L1102 257V264.500ZM1114.500 257L1110 264H1119ZM1109 255.500L1111 257.500H1118L1120.500 254" stroke={RED} strokeWidth="1.700" />
    <T x={1132} y={245.500} w={20} s={15.500}>Q3</T>

    <rect x="1102" y="869" width="47" height="23" fill={BODY} stroke={RED} strokeWidth="2" />
    <W c={RED} d="M1114 846V876M1126 846V876M1137 846V876" />
    {[1114, 1126, 1137].map(x => <circle key={x} cx={x} cy="880.500" r="4" stroke={RED} strokeWidth="1.800" />)}
    <T x={1101} y={907} w={15.500} s={15.500}>J1</T>

    <W c="#ff0000" d="M1032 448V496M1032 541V623" />
    <circle cx="1032.200" cy="518.500" r="22.500" fill="#000" stroke="#ff0000" strokeWidth="2" />
    <circle cx="1032.200" cy="518.500" r="6" fill={BODY} stroke="#ff0000" strokeWidth="2.200" />
    <path d="M1020.500 506Q1010 518.500 1020.500 531L1024 527.500Q1017 518.500 1024 509.500ZM1045 506Q1055 518.500 1045 531L1041 527.500Q1048 518.500 1041 509.500Z" stroke="#ff0000" strokeWidth="1.100" />
    <circle cx="997.500" cy="564.500" r="4" stroke="#1010c0" /><path d="M991 564.500H1004M997.500 558V571" stroke="#1010c0" strokeWidth="1.200" />

    {terms.map(([x, y], i) => <Term key={i} x={x} y={y} />)}
    {dots.map(([x, y], i) => <Dot key={i} x={x} y={y} />)}
    {labels.map(([t, x, y, w], i) => <T key={i} x={x} y={y} w={w}>{t}</T>)}
    {vlabels.map(([t, x, y, w], i) => <V key={i} x={x} y={y} w={w}>{t}</V>)}
  </svg>
);

const MiniMap = () => (
  <svg width="119" height="99" viewBox="32 131 119 99" fill="none">
    <path d="M32 135.500H151M32 224.500H151" stroke="#00c800" />
    <rect x="42" y="139.500" width="99" height="82.500" stroke="#000" strokeWidth="2" />
    <g stroke="#000" strokeWidth="1" shapeRendering="crispEdges">
      <path d="M62 146.500H71M66 146V150H71M62 154.500H67V160M56 160.500H66M67 156.500H73V159M77.500 149V156M79.500 149V156M78.500 163V169" />
      <path d="M57 181.500H71V186M54 187.500H65M72 183V188M77.500 177V183M79.500 177V183M78.500 191V196M64.500 203V214M71.500 203V213" />
      <path d="M92 150.500H100M101.500 143V161M104 150V158.500H110M104 150.500H118M120.500 152V170M112 161.500H118M125 148.500L134 150M125 153.500L134 155M94.500 167V188" />
      <path d="M114 182.500H120M121.500 175V192M82 200.500H95M109 200.500H124M105.500 221V211.500H141M130.500 211V222M108 214V220M113 213V219M126 219H130M133 213V221" />
    </g>
    <rect x="75" y="156" width="6" height="7" fill="#000" /><rect x="75" y="184" width="6" height="7" fill="#000" />
    <path d="M76 158V161M76 186V189" stroke="#dfdfd0" />
    <circle cx="100.500" cy="149.500" r="2.500" fill="#000" /><circle cx="94.500" cy="175.500" r="2.800" fill="#000" />
    <path d="M101 204H104V209H101ZM63 212H66V214H63ZM61 159H65V162H61ZM60 186H62V189H60Z" fill="#000" /><path d="M119 159L121 162M111 150V153M88 200.500H91M100 211H105V215H100Z" stroke="#000" strokeWidth="1.500" />
  </svg>
);

const menus: [string, number][] = [['File', 37.5], ['Edit', 40], ['View', 46], ['Tool', 43], ['Design', 59.5], ['Graph', 54.5], ['Debug', 58.5], ['Library', 59.5], ['Template', 75.500], ['System', 61], ['Help', 40]];
const devices = ['1N4001', '2N2222', 'G5CLE-1-DC5', 'IRF540N', 'LED', 'MINRES100R', 'MOTOR', 'SIL-156-03'];

export default function App() {
  return (
    <Window>
      <GlobalStyle />
      <TitleBar>
        <I w={16} h={24}><path d="M-1 5L13 19M0 21L12 5" stroke="#777" strokeWidth="1.600" /><circle cx="5" cy="12.500" r="5.500" fill="#243a66" /><circle cx="3" cy="10.500" r="2" fill="#6a8cc8" /></I>
        <TitleText>Muhammad Haseeb - Proteus 8 Professional - Schematic Capture</TitleText>
        <WinControls>
          <WinButton><I w={14} h={14}><path d="M1 7H13" stroke="#000" strokeWidth="1.200" /></I></WinButton>
          <WinButton><I w={14} h={14}><path d="M1.500 3.500H10.500V12.500H1.500ZM4 3.500V1H12.500V10H10.500" stroke="#000" strokeWidth="1.200" /></I></WinButton>
          <WinButton><I w={14} h={14}><path d="M1 1L13 13M13 1L1 13" stroke="#000" strokeWidth="1.100" /></I></WinButton>
        </WinControls>
      </TitleBar>
      <MenuBar>{menus.map(([m, w]) => <MenuItem key={m} $w={w}>{m}</MenuItem>)}</MenuBar>

      <Toolbars>
        <Bar $w={471} $pad={4}><Tool n="new" soft />{tools('open save exit | home schem pcb viz gerber design bom hex report | help')}</Bar>
        <Bar $w={138} $pad={3}><Grip $m={5} /><Select>Base Design<I w={11} h={8}><path d="M1 1.500L5.500 6L10 1.500" stroke="#444" strokeWidth="1.200" /></I></Select></Bar>
        <Bar $w={287} $pad={4}><Grip $m={5} />{tools('refresh')}<Tool n="grid" on />{tools('| origin | pan zin zout zall zarea')}</Bar>
        <Bar $w={454} $pad={3}><Grip $m={5} />{tools('undo redo | cut copy paste | bcopy bmove brot bdel | pick make pack hammer')}</Bar>
        <Bar $w={262} $pad={3}><Grip $m={5} /><Tool n="wire" on />{tools('| bino prop | nsheet dsheet tree | erc')}</Bar>
      </Toolbars>

      <Tabs>
        <TabShape $w={212} $active $pad={18}><I w={18} h={20} vb="0 0 24 24">{schem}</I><TabLabel $ls={-0.1}>Schematic Capture</TabLabel><Close /></TabShape>
        <TabShape $w={149} $pad={15}><I w={19} h={18} vb="0 0 24 24">{pcb}</I><TabLabel $ls={-0.65}>PCB Layout</TabLabel><Close /></TabShape>
        <TabShape $w={159} $pad={16}><I w={20} h={20} vb="0 0 24 24">{viz}</I><TabLabel $ls={-0.5}>3D Visualizer</TabLabel><Close /></TabShape>
      </Tabs>
      <Band />

      <Main>
        <Rail>
          <RailGroup $h={682} $pt={3}>
            <RailGrip />
            {railTools('arrow comp junc lbl script bus chip | ports pin graph tape gen probe meter | line box circ arc path text sym mark')}
          </RailGroup>
          <RailGroup $h={162} $pt={3}>
            <RailGrip />
            {railTools('rcw rccw')}<Angle>0°</Angle><RailRule />{railTools('fh fv')}
          </RailGroup>
        </Rail>
        <Side>
          <Overview><MiniMap /></Overview>
          <Gap />
          <Devices>
            <DevHead><KeyCap>P</KeyCap><KeyCap>L</KeyCap><DevTitle>DEVICES</DevTitle></DevHead>
            <DevList>{devices.map(d => <DevRow key={d} $sel={d === 'MOTOR'}>{d}</DevRow>)}</DevList>
          </Devices>
        </Side>
        <span />
        <Canvas><Schematic /></Canvas>
        <span />
      </Main>

      <Status>
        <StatusBar $w={313}>
          <I w={184} h={30}>
            <defs><linearGradient id="tr" x2="0" y2="1"><stop stopColor="#0878c0" /><stop offset="1" stopColor="#0008ff" /></linearGradient></defs>
            <g fill="url(#tr)" stroke="#1a5a90" strokeWidth=".7">
              <path d="M14 3.500V26.500L37.500 15Z" /><path d="M58 3.500H61.500V26.500H58ZM65 3.500V26.500L81.500 15Z" /><path d="M106 3.500H112.500V26.500H106ZM115.500 3.500H122V26.500H115.500Z" /><rect x="146" y="3.500" width="23.500" height="23" />
            </g>
          </I>
          <Divider />
          <I w={26} h={26}><circle cx="15" cy="13" r="11.500" fill="#8a8e91" stroke="#a5a9ab" /><text x="15" y="20" fontSize="19" fontWeight="bold" textAnchor="middle" fill="#fff" fontFamily="Liberation Serif">i</text></I>
          <Dim>No Messages</Dim>
        </StatusBar>
        <StatusBar $w={411}><Grip $m={9} /><Msg>Start a new project.</Msg></StatusBar>
        <StatusBar><Grip $m={0} /></StatusBar>
      </Status>

      <Taskbar>
        <Start><I w={20} h={20}><path d="M0 2.800L8.500 1.500V9.500H0ZM9.500 1.400L20 0V9.500H9.500ZM0 10.500H8.500V18.500L0 17.200ZM9.500 10.500H20V20L9.500 18.600Z" fill="#fff" /></I></Start>
        <Search><I w={22} h={22}><circle cx="13.500" cy="8.500" r="6.800" stroke="#e8e8e8" strokeWidth="1.700" /><path d="M8.500 13.500L1.500 20.500" stroke="#e8e8e8" strokeWidth="1.700" /></I>Type here to search</Search>
        <Task $w={60}><I w={22} h={20}><path d="M2 0V3H14V0M2 20V17H14V20M2 6H14V14H2ZM19 0V5M19 11V20" stroke="#fff" strokeWidth="1.500" /><rect x="18" y="6.500" width="3" height="3" fill="#fff" /></I></Task>
        <Task $w={66}><I w={26} h={27}><path d="M1 12C2 3 8 0 13.500 0C21 0 25.500 6 25.500 12V15.500H9C9 20 13 22 17 22C20 22 22 21 24 20V25C20 27.500 9 28.500 5 22C2 16 6 9 12 7C6 7 3 9 1 12ZM9.500 11H17.500C17.500 8 16 6.300 13.500 6.300C11.500 6.300 10 8 9.500 11Z" fill="#0a7ad8" /></I></Task>
        <Task $w={60} $run={51}><I w={30} h={26}><path d="M1 3V1.500H12L14 4V7H1Z" fill="#e8a818" /><path d="M1 4.500H28V23H1Z" fill="#ffd766" /><path d="M6 23V16Q6 13 9 13H20Q23 13 23 16V23H18.500V18H10.500V23Z" fill="#3f9fe6" /></I></Task>
        <Task $w={62}><I w={30} h={31}><path d="M10.500 10V2.500Q10.500 1 12 1H18Q19.500 1 19.500 2.500V10" stroke="#ddd" strokeWidth="1.600" /><path d="M.5 8H29.500V28Q29.500 30 27.500 30H2.500Q.5 30 .5 28Z" fill="#f2f2f2" /><path d="M9 14H14.500V19H9Z" fill="#f25022" /><path d="M15.500 14H21V19H15.500Z" fill="#7fba00" /><path d="M9 20H14.500V25.500H9Z" fill="#00a4ef" /><path d="M15.500 20H21V25.500H15.500Z" fill="#ffb900" /></I></Task>
        <Task $w={63}><I w={30} h={30}><path d="M0 10L15 1L30 10V28H0Z" fill="#0a62b8" /><path d="M0 10.500H30L15 23Z" fill="#f6f6f6" /><path d="M0 11L24 29H0Z" fill="#28a8ea" /><path d="M30 11L6 29H30Z" fill="#1ba0f0" opacity=".9" /></I></Task>
        <Task $w={60}><I w={30} h={30}><rect width="30" height="30" fill="#000" /><path d="M11.500 6V24.500M18.500 6V24.500" stroke="#b1060f" strokeWidth="2.800" /><path d="M10 5.500H13.200L20 24.500H16.800Z" fill="#e50914" /></I></Task>
        <Task $w={65} $run={51}><I w={30} h={30}><circle cx="15" cy="16" r="13.500" fill="#ff4a3a" /><path d="M2 10C0 24 9 31 18 29C27 27 31 15 26 8C24 4 19 4 18 1C13 6 17 10 13 11C10 6 8 9 7 5C5 8 4 8 2 10Z" fill="#ff9a1c" /><path d="M18 1C16 6 24 8 25 15C26 24 17 30 9 27C18 32 30 25 28.500 13C28 8 21 6 18 1Z" fill="#ffd83a" /><circle cx="14.500" cy="16.500" r="6" fill="#7a3ad8" /><path d="M2 12C0 24 9 31 18 28.500C12 28 8 25 7 18Z" fill="#f2306a" /></I></Task>
        <Task $w={61}><I w={28} h={28}><rect width="28" height="28" rx="9" fill="#4a8cff" /><rect x="5.500" y="9" width="11.500" height="10" rx="2" fill="#fff" /><path d="M18 12.500L22.500 9.500V18.500L18 15.500Z" fill="#fff" /></I></Task>
        <Task $w={61} $run={61} $active><I w={32} h={28}><path d="M6 2L10 9M26 2L22 9M7 26L10 21M25 26L22 21" stroke="#d0a040" strokeWidth="1.800" /><path d="M10 9L16 20L22 9M10 21L14 15M22 21L18 15" stroke="#9aa4b2" strokeWidth="1.300" /><ellipse cx="16" cy="13.500" rx="14" ry="5.500" stroke="#8a97a8" strokeWidth="1.500" /><path d="M11 14L16 16L21 14L19.500 20.500H12.500Z" fill="#5a82c8" /></I></Task>
        <Task $w={64} $run={51}><I w={29} h={29}><rect width="29" height="29" rx="1.500" fill="#28a8ea" /><circle cx="19" cy="7" r="2.500" fill="#fff" /><path d="M14 19L21 11L29 20V29H14Z" fill="#7a84d8" /><path d="M0 19L8 10L25 29H0Z" fill="#14509c" /></I></Task>
        <Spacer />
        <Tray>
          <TrayIcon $w={25}><I w={17} h={10}><path d="M1 9L8.500 1.500L16 9" stroke="#fff" strokeWidth="1.500" /></I></TrayIcon>
          <TrayIcon $w={35}><I w={18} h={18}><path d="M1.500 16C1.500 7 8 2 16 2M5.500 16.500C5.500 10 10 6.500 16 6.500M9.500 16.500C9.500 13 12 11 16 11" stroke="#fff" strokeWidth="1.300" /><circle cx="14.500" cy="15.500" r="1.800" fill="#fff" /></I></TrayIcon>
          <TrayIcon $w={25}><I w={21} h={18}><path d="M1.500 6H4.500L9 1.500V16.500L4.500 12H1.500Z" stroke="#fff" strokeWidth="1.300" /><path d="M12 6C13.500 8 13.500 10 12 12" stroke="#fff" strokeWidth="1.200" /><path d="M14.500 4C17 7 17 11 14.500 14M17 2C20.500 6 20.500 12 17 16" stroke="#77838b" strokeWidth="1.100" /></I></TrayIcon>
          <Clock>1:54 pm<br />22/12/2020</Clock>
          <Notice><I w={32} h={38}><path d="M2 4H21V21H12L7 25V21H2Z" fill="#fff" /><path d="M5 8.500H18M5 12.500H18M5 16.500H15" stroke="#1b2a34" strokeWidth="1.500" /><circle cx="20.500" cy="25" r="10" fill="#2a3842" stroke="#8a949b" strokeWidth="1.200" /><text x="20.500" y="30" fontSize="13.500" fontWeight="bold" textAnchor="middle" fill="#fff" fontFamily="Open Sans">2</text></I></Notice>
          <DesktopEdge />
        </Tray>
      </Taskbar>
    </Window>
  );
}
